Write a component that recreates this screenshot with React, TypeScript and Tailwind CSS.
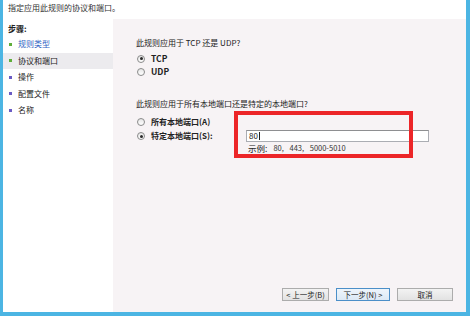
const steps = [
  { label: '规则类型', color: 'bg-[#5fae3a]', current: true },
  { label: '协议和端口', color: 'bg-[#5fae3a]', active: true },
  { label: '操作', color: 'bg-[#6a5bc4]' },
  { label: '配置文件', color: 'bg-[#6a5bc4]' },
  { label: '名称', color: 'bg-[#6a5bc4]' },
]

const Radio = ({ checked }: { checked?: boolean }) => (
  <span className="w-[8px] h-[8px] rounded-full border border-[#8a8a8a] bg-gradient-to-b from-[#e6e6e6] to-white flex items-center justify-center shrink-0">
    {checked && <span className="w-[3px] h-[3px] rounded-full bg-[#2a2a2a]" />}
  </span>
)

const Button = ({ children, primary }: { children: React.ReactNode; primary?: boolean }) => (
  <div
    className={
      'h-[13px] flex items-center justify-center border text-[7.5px] ' +
      (primary
        ? 'border-[#4b8fc8] bg-gradient-to-b from-[#eef5fb] to-[#dce9f5]'
        : 'border-[#acacac] bg-gradient-to-b from-[#f3f3f3] to-[#e2e2e2]')
    }
  >
    {children}
  </div>
)

export default function App() {
  return (
    <div className="w-[471px] h-[323px] bg-white font-['Noto_Sans_CJK_SC','Noto_Sans',sans-serif] text-[8px] leading-none text-[#222]">
      <div className="w-[470px] h-[316px] border-l-[3px] border-r-[4px] border-b-[4px] border-[#4cb5e3] flex flex-col">
        {/* header */}
        <div className="h-[19px] pt-[4px] pl-[5px] text-[#333] bg-white">指定应用此规则的协议和端口。</div>

        <div className="flex-1 flex">
          {/* steps */}
          <div className="w-[110px] bg-white pt-[2px]">
            <div className="h-[15px] flex items-center pl-[5px] font-bold">步骤:</div>
            {steps.map((s) => (
              <div
                key={s.label}
                className={'h-[16.5px] flex items-center gap-[6px] pl-[6px] ' + (s.active ? 'bg-[#ecebee]' : '')}
              >
                <span className={'w-[3px] h-[3px] ' + s.color} />
                <span className={s.current ? 'text-[#2f63c4]' : ''}>{s.label}</span>
              </div>
            ))}
          </div>

          {/* content */}
          <div className="flex-1 bg-[#f7f3f5] relative flex flex-col pl-[23px] pr-[13px] pb-[11px]">
            <div className="h-[10px] mt-[19px] flex items-center">此规则应用于 TCP 还是 UDP?</div>
            <div className="mt-[4px] h-[13px] flex items-center gap-[6px] pl-[1px] font-bold text-[8.5px]">
              <Radio checked />
              <span>TCP</span>
            </div>
            <div className="h-[13px] flex items-center gap-[6px] pl-[1px] font-bold text-[8.5px]">
              <Radio />
              <span>UDP</span>
            </div>

            <div className="h-[10px] mt-[21px] flex items-center">此规则应用于所有本地端口还是特定的本地端口?</div>
            <div className="mt-[6px] h-[13px] flex items-center gap-[6px] pl-[1px] font-bold">
              <Radio />
              <span>所有本地端口(A)</span>
            </div>
            <div className="mt-[1px] flex">
              <div className="w-[110px] h-[14px] flex items-center gap-[6px] pl-[1px] font-bold">
                <Radio checked />
                <span>特定本地端口(S):</span>
              </div>
              <div className="flex flex-col">
                <div className="mt-[1px] w-[183px] h-[12px] bg-white border border-[#abadb3] border-t-[#8e8f91] flex items-center pl-[2px]">
                  <span>80</span>
                  <span className="w-px h-[8px] bg-[#222] ml-px" />
                </div>
                <div className="mt-[1px] h-[10px] flex items-center pl-[2px]">
                  <span className="text-[8.5px]">示例:</span>
                  <span className="ml-[6px] text-[7.5px] text-[#333] [word-spacing:4px]">80, 443, 5000-5010</span>
                </div>
              </div>
            </div>

            {/* annotation */}
            <div className="absolute left-[121px] top-[92px] w-[179px] h-[47px] border-4 border-[#ec2528]" />

            <div className="mt-auto flex justify-end gap-[7px]">
              <div className="w-[47px]">
                <Button>&lt; 上一步(B)</Button>
              </div>
              <div className="w-[54px]">
                <Button primary>下一步(N) &gt;</Button>
              </div>
              <div className="w-[56px]">
                <Button>取消</Button>
              </div>
            </div>
          </div>
        </div>
      </div>
    </div>
  )
}
